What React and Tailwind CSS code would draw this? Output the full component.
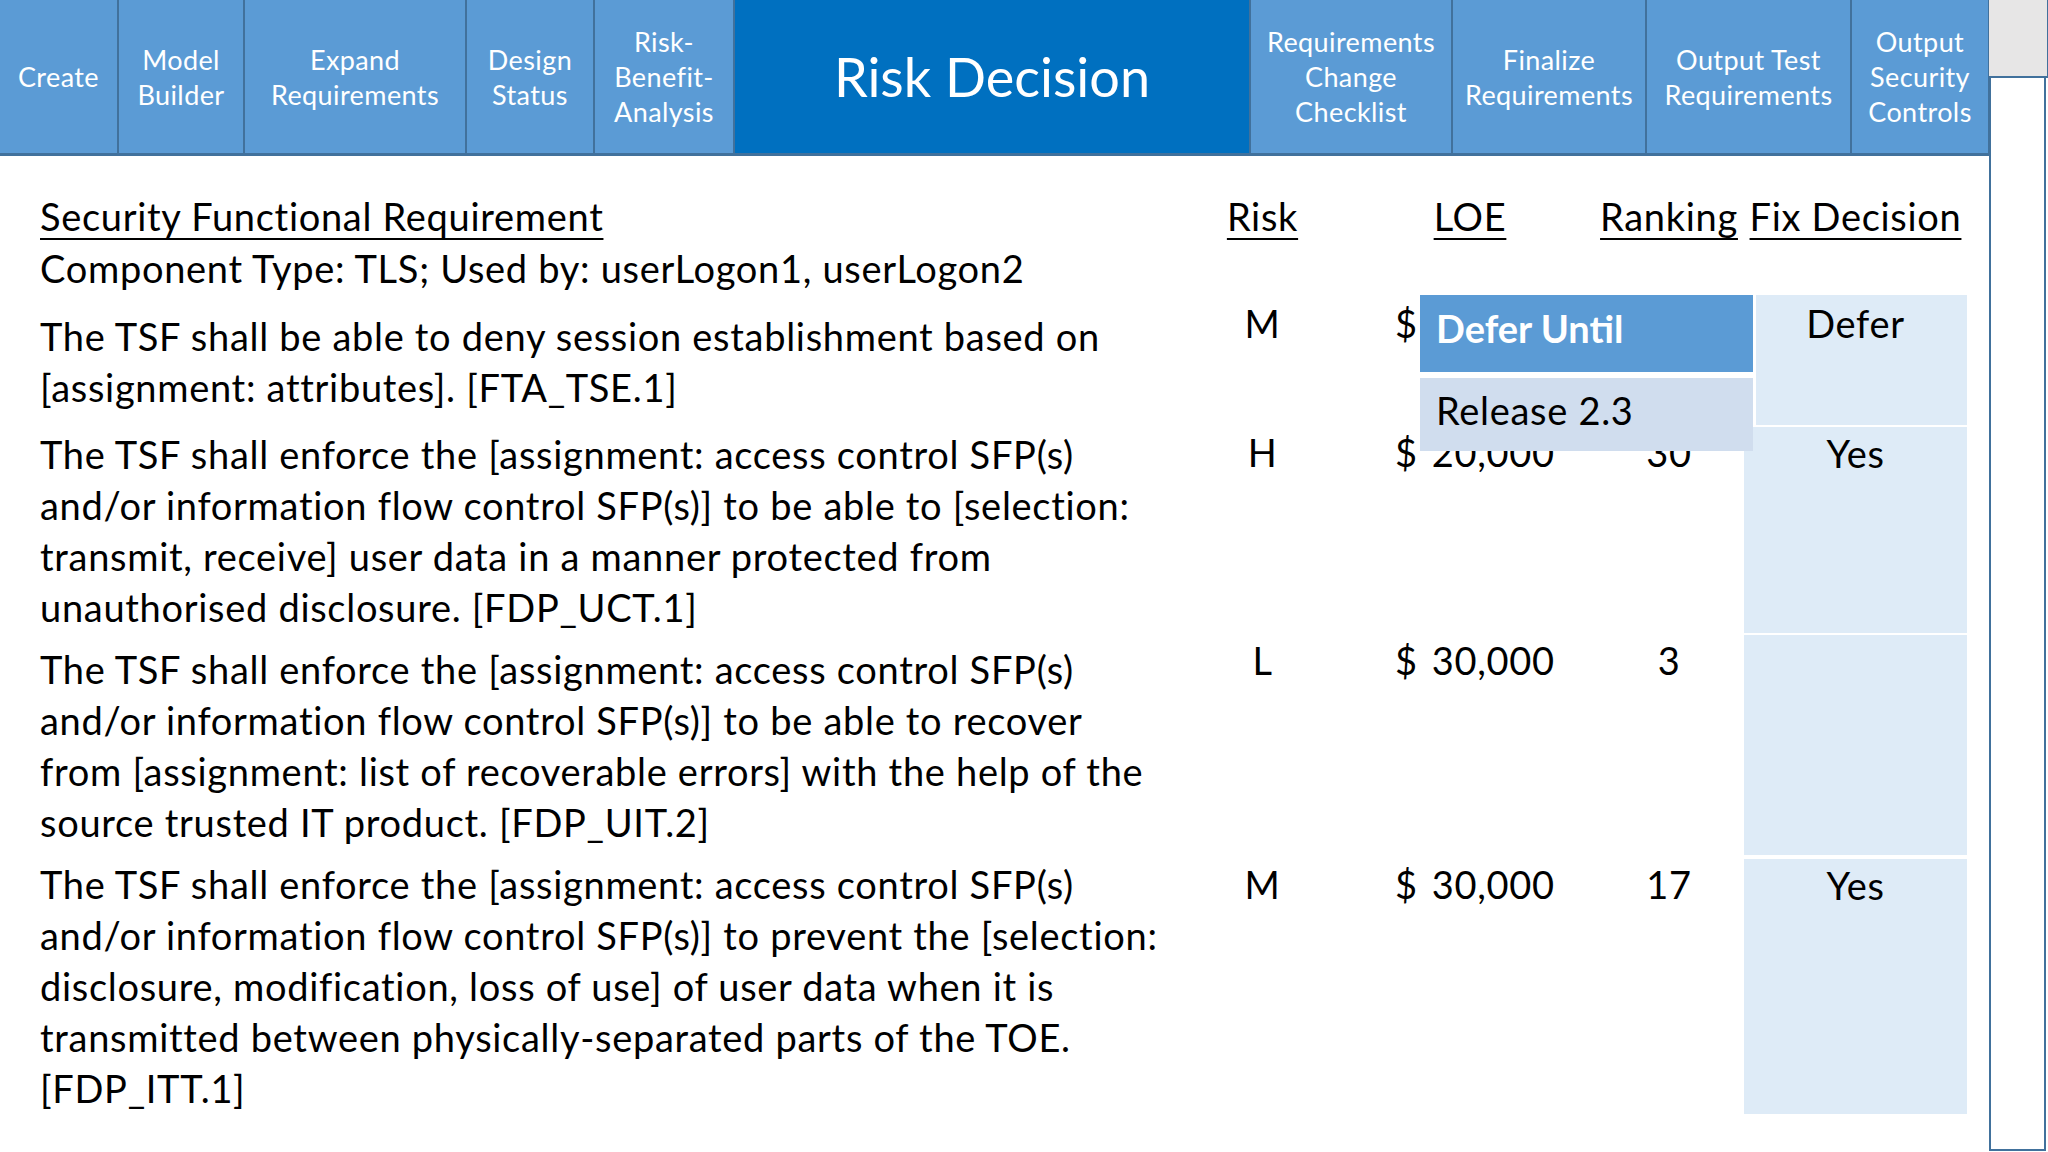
const tabs = [
  { lines: ['Create'], w: 'w-[119px]' },
  { lines: ['Model', 'Builder'], w: 'w-[126px]' },
  { lines: ['Expand', 'Requirements'], w: 'w-[222px]' },
  { lines: ['Design', 'Status'], w: 'w-[128px]' },
  { lines: ['Risk-', 'Benefit-', 'Analysis'], w: 'w-[140px]' },
  { lines: ['Risk Decision'], w: 'w-[516px]', active: true },
  { lines: ['Requirements', 'Change', 'Checklist'], w: 'w-[202px]' },
  { lines: ['Finalize', 'Requirements'], w: 'w-[194px]' },
  { lines: ['Output Test', 'Requirements'], w: 'w-[205px]' },
  { lines: ['Output', 'Security', 'Controls'], w: 'w-[138px]' },
];

const rows = [
  {
    text: [
      'The TSF shall be able to deny session establishment based on',
      '[assignment: attributes]. [FTA_TSE.1]',
    ],
    risk: 'M',
    loe: '',
    rank: '',
    fix: 'Defer',
    h: 'h-[130px]',
    mt: 'mt-[1px]',
    pt: 'pt-[16px]',
  },
  {
    text: [
      'The TSF shall enforce the [assignment: access control SFP(s)',
      'and/or information flow control SFP(s)] to be able to [selection:',
      'transmit, receive] user data in a manner protected from',
      'unauthorised disclosure. [FDP_UCT.1]',
    ],
    risk: 'H',
    loe: '20,000',
    rank: '30',
    fix: 'Yes',
    h: 'h-[204px]',
    mt: 'mt-[2px]',
    pt: 'pt-[2px]',
  },
  {
    text: [
      'The TSF shall enforce the [assignment: access control SFP(s)',
      'and/or information flow control SFP(s)] to be able to recover',
      'from [assignment: list of recoverable errors] with the help of the',
      'source trusted IT product. [FDP_UIT.2]',
    ],
    risk: 'L',
    loe: '30,000',
    rank: '3',
    fix: '',
    h: 'h-[220px]',
    mt: 'mt-[4px]',
    pt: 'pt-[9px]',
  },
  {
    text: [
      'The TSF shall enforce the [assignment: access control SFP(s)',
      'and/or information flow control SFP(s)] to prevent the [selection:',
      'disclosure, modification, loss of use] of user data when it is',
      'transmitted between physically-separated parts of the TOE.',
      '[FDP_ITT.1]',
    ],
    risk: 'M',
    loe: '30,000',
    rank: '17',
    fix: 'Yes',
    h: 'h-[252px]',
    mt: 'mt-[4px]',
    pt: 'pt-0',
  },
];

const NavTab = ({ tab }) => (
  <div
    className={`${tab.w} h-full shrink-0 flex flex-col items-center justify-center text-center text-white border-r-2 border-[#41719C] ${
      tab.active
        ? 'bg-[#0070C0] text-[54px] leading-[60px]'
        : 'bg-[#5B9BD5] text-[27px] leading-[35px] tracking-[0.4px]'
    }`}
  >
    {tab.lines.map((l) => (
      <span key={l} className="whitespace-nowrap">{l}</span>
    ))}
  </div>
);

// open dropdown of the first row's fix decision
const DeferMenu = () => (
  <div className="absolute z-10 left-[1380px] top-0 w-[333px] flex flex-col">
    <div className="h-[77px] bg-[#5B9BD5] pl-[16px] pt-[8px] text-white font-bold text-[38px] leading-[51px] tracking-normal">
      Defer Until
    </div>
    <div className="mt-[6px] h-[73px] bg-[#D0DDEE] pl-[16px] pt-[7px] text-black">
      Release 2.3
    </div>
  </div>
);

const ReqRow = ({ row, first }) => (
  <div className={`relative grid grid-cols-[1155px_135px_264px_150px_223px] ${row.h} ${row.mt}`}>
    <div className={`${row.pt} whitespace-nowrap`}>
      {row.text.map((l, i) => (
        <div key={i}>{l}</div>
      ))}
    </div>
    <div className={`text-center ${first ? 'pt-[3px]' : 'pt-0'}`}>{row.risk}</div>
    <div className={`flex pl-[65px] ${first ? 'pt-[3px]' : 'pt-0'}`}>
      <span>$</span>
      {row.loe && <span className="ml-[14px]">{row.loe}</span>}
    </div>
    <div className={`text-center ${first ? 'pt-[3px]' : 'pt-0'}`}>{row.rank}</div>
    <div className={`h-full bg-[#DEEBF7] text-center ${first ? 'ml-[12px] pr-[12px] pt-[3px]' : 'pt-[1px]'}`}>
      {row.fix}
    </div>
    {first && <DeferMenu />}
  </div>
);

export default function App() {
  return (
    <div className="flex w-[2048px] h-[1152px] overflow-hidden bg-white text-black font-['Lato',sans-serif]">
      <div className="w-[1989px] shrink-0 flex flex-col">
        <div className="flex h-[156px] border-b-[3px] border-[#41719C]">
          {tabs.map((t) => (
            <NavTab key={t.lines.join(' ')} tab={t} />
          ))}
        </div>

        <div className="pl-[40px] pt-[34px] text-[38px] leading-[51px] tracking-[0.7px]">
          <div className="grid grid-cols-[1155px_135px_264px_150px_223px] leading-[52px]">
            <div className="whitespace-nowrap">
              <span className="underline decoration-2 underline-offset-[7px]">Security Functional Requirement</span>
            </div>
            <div className="text-center">
              <span className="underline decoration-2 underline-offset-[7px]">Risk</span>
            </div>
            <div className="text-center pl-4">
              <span className="underline decoration-2 underline-offset-[7px]">LOE</span>
            </div>
            <div className="text-center whitespace-nowrap">
              <span className="underline decoration-2 underline-offset-[7px]">Ranking</span>
            </div>
            <div className="text-center whitespace-nowrap">
              <span className="underline decoration-2 underline-offset-[7px]">Fix Decision</span>
            </div>
          </div>
          <div className="leading-[52px] whitespace-nowrap">
            Component Type: TLS; Used by: userLogon1, userLogon2
          </div>

          {rows.map((r, i) => (
            <ReqRow key={i} row={r} first={i === 0} />
          ))}
        </div>
      </div>

      <div className="w-[59px] shrink-0 flex flex-col">
        <div className="h-[78px] bg-[#E7E6E6] border-b-2 border-r border-[#41719C]" />
        <div className="flex-1 mb-[1px] mr-[2px] border-l-2 border-r-2 border-b-2 border-[#41719C] bg-white" />
      </div>
    </div>
  );
}
